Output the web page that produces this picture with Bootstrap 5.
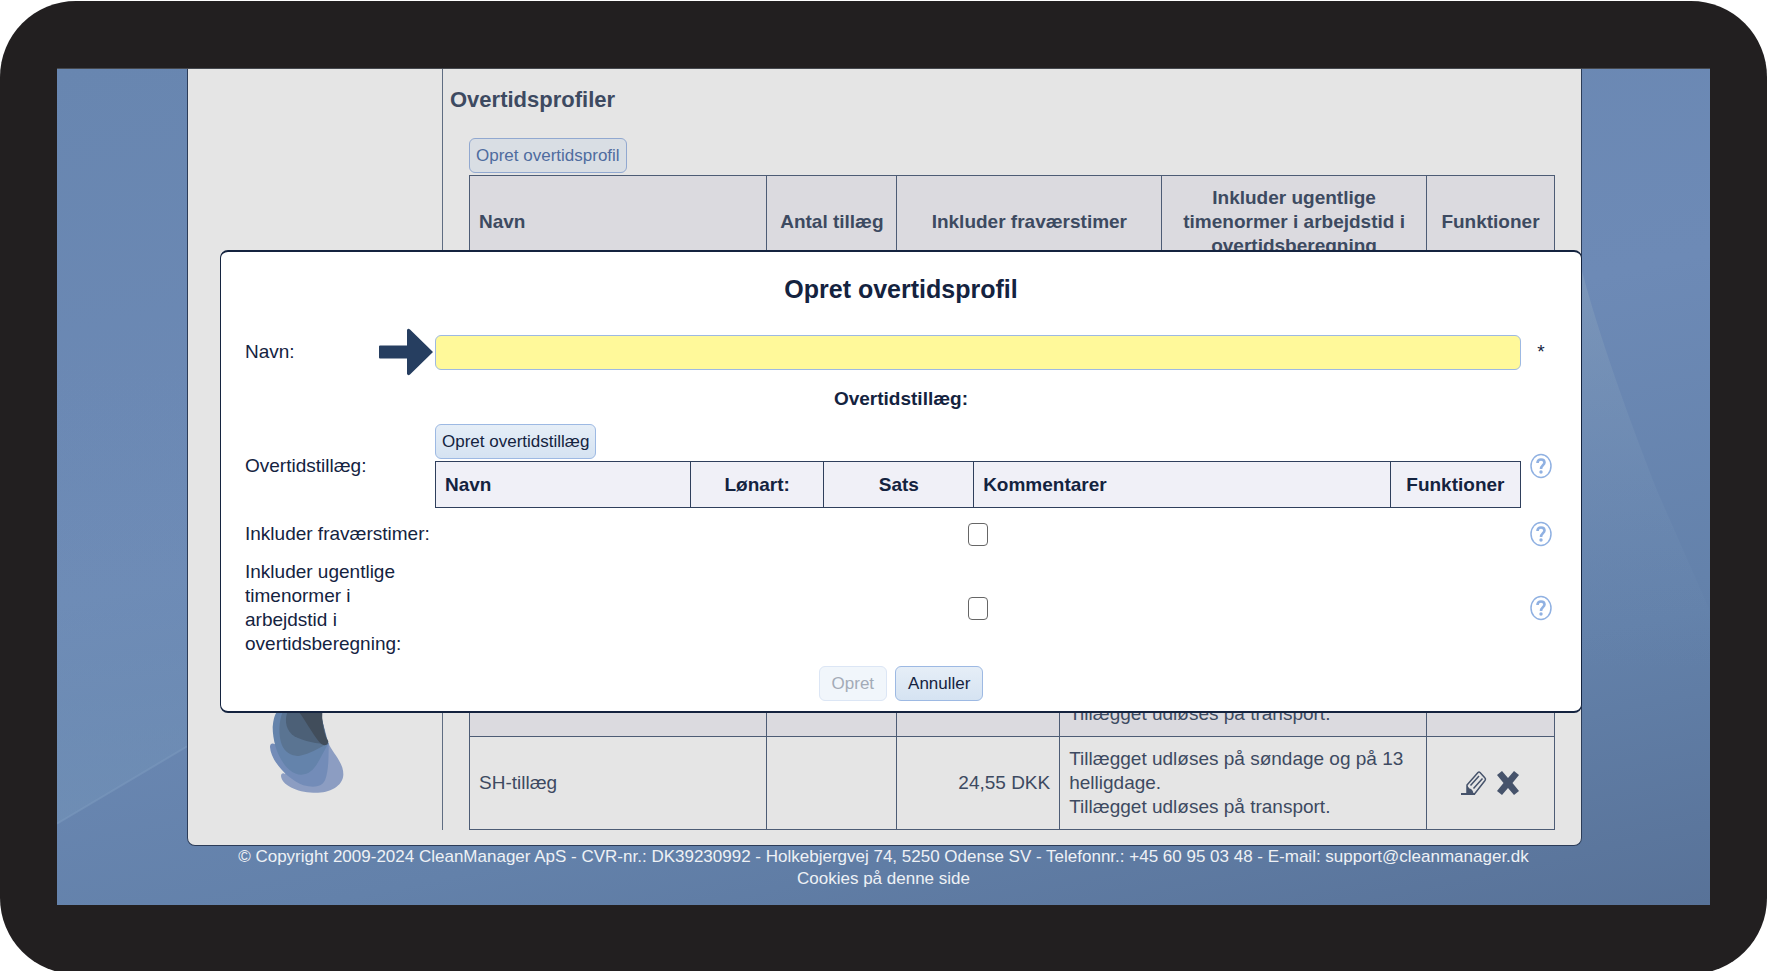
<!DOCTYPE html>
<html lang="da">
<head>
<meta charset="utf-8">
<meta name="viewport" content="width=device-width, initial-scale=1">
<title>Overtidsprofiler</title>
<link href="https://cdn.jsdelivr.net/npm/bootstrap@5.3.0/dist/css/bootstrap.min.css" rel="stylesheet">
<style>
  body { font-family: "Liberation Sans", Arial, sans-serif; font-size: 19px; line-height: 24px; color: #14233f; background: #fff; }
  .device { background: #221f20; border-radius: 76px; padding: 67px 57px 69px; margin-top: 1px; }
  .screen { background: linear-gradient(168deg, #6886b0 0%, #6d8ab6 45%, #6381aa 75%, #587298 100%); border-top: 1px solid #45484e; overflow: hidden; }
  .backdrop { inset: 0; }
  .panel { background: #e5e5e5; border: 1px solid #2c3c58; border-top: 0; border-radius: 0 0 8px 8px; margin: 0 128px 0 130px; padding-bottom: 15px; color: #3d4a61; }
  .side { width: 255px; border-right: 1px solid #5f6d82; padding: 0 0 18px 62px; }
  .main { padding: 18px 26px 0 26px; }
  .main h1 { font-size: 22px; line-height: 26px; font-weight: 700; margin: 0 0 25px -19px; }
  .cm-btn { font-size: 17px; line-height: 21px; padding: 6px; border: 1px solid #9db9e3; border-radius: 6px; background: linear-gradient(#e6eef7, #d5e3f2); color: #14233f; }
  .cm-btn:disabled { opacity: 1; background: #f1f6fb; border-color: #dce6f5; color: #a3abb7; }
  .muted-btn { background: #d9dee4; border-color: #91a8d0; color: #4f6c9f; }
  .wide-btn { padding: 6px 12px; }
  .grid-table { width: 100%; table-layout: fixed; border-collapse: collapse; margin-top: 2px; }
  .grid-table th, .grid-table td { border: 1px solid #4d5c75; padding: 10px 9px; }
  .grid-table th, .shade td { background: #dbdadf; }
  .gap-row td { height: 375px; }
  .cut-row td { height: 93px; vertical-align: bottom; }
  .footer-text { font-size: 17px; line-height: 22px; color: #eef1f5; padding-bottom: 15px; }
  .footer-text a { color: inherit; text-decoration: none; }
  .dialog-box { top: 181px; left: 32px; right: -1px; background: #fff; border: 1px solid #14233f; border-width: 2px 1px; border-radius: 8px; color: #14233f; padding: 22px 20px 10px 24px; }
  .dialog-box h2 { font-size: 25px; line-height: 30px; font-weight: 700; margin: 0 4px 24px 0; }
  .form-grid { display: grid; grid-template-columns: 190px 1fr 40px; align-items: center; row-gap: 13px; }
  .form-grid h3 { grid-column: 1 / -1; font-size: 19px; line-height: 24px; font-weight: 700; margin: -2px 4px 0 0; }
  .name-input { height: 35px; background: #fff99a; border: 1px solid #9db9e3; border-radius: 6px; padding: 0 8px; width: 100%; }
  .label-text { padding-right: 8px; }
  .inner-table th { background: #f0f0f7; border-color: #2f3f5c; height: 46px; padding: 0 9px; }
  .tick { appearance: none; width: 20px; height: 23px; border: 1px solid #666; border-radius: 4px; background: #fff; margin: 0; display: block; }
  .tick:checked { background: #2d6bd1; }
  .icon-btn { border: 0; background: none; padding: 0; line-height: 0; }
  .dialog-actions { margin: 10px 4px 0 0; }
</style>
</head>
<body>
<div class="device">
  <div class="screen position-relative">
    <svg class="backdrop position-absolute w-100 h-100" viewBox="0 0 1653 833" preserveAspectRatio="none" aria-hidden="true">
      <defs>
        <linearGradient id="leftGlow" x1="0" y1="0" x2="0" y2="1"><stop offset="0" stop-color="#6d8db6" stop-opacity="0"/><stop offset="1" stop-color="#7393b8"/></linearGradient>
        <linearGradient id="rightGlow" x1="0" y1="0" x2="0" y2="1"><stop offset="0" stop-color="#8aa2bd"/><stop offset="1" stop-color="#7090b8" stop-opacity="0"/></linearGradient>
      </defs>
      <path d="M0 290H130V675L0 752Z" fill="url(#leftGlow)" opacity=".6"/>
      <path d="M0 752L130 675" stroke="#7a98bd" stroke-width="2" opacity=".6"/>
      <path d="M1522 190Q1545 280 1600 420L1653 540V600H1522Z" fill="url(#rightGlow)" opacity=".5"/>
    </svg>

    <div class="panel position-relative d-flex">
      <aside class="side d-flex flex-column justify-content-end flex-shrink-0">
        <svg width="160" height="110" viewBox="0 0 480 330" role="img" aria-label="CleanManager">
          <path d="M235 122C245 150 281 180 280 218C278 255 235 274 190 272C140 271 95 248 93 222C93 214 100 212 105 216L120 190Z" fill="#8c9dc2"/>
          <path d="M236 122C236 170 236 205 225 235C215 256 190 258 160 250C110 230 62 175 60 135C60 124 68 122 75 127L150 110Z" fill="#738cb8"/>
          <path d="M235 124C215 160 200 195 182 208C165 222 140 222 118 203C85 175 68 120 68 75Q70 45 80 30H210Z" fill="#6483ab"/>
          <path d="M233 126C205 138 180 156 150 161C125 165 105 150 96 130C84 100 87 55 98 30H210Z" fill="#5a7492"/>
          <path d="M232 127C205 126 160 118 133 103C110 88 102 60 112 30H212Z" fill="#4c6077"/>
          <path d="M147 30C170 60 195 110 215 127Q233 135 235 118C222 95 215 70 217 30Z" fill="#414d5b"/>
        </svg>
      </aside>
      <main class="main flex-grow-1">
        <h1>Overtidsprofiler</h1>
        <button type="button" class="cm-btn muted-btn d-block">Opret overtidsprofil</button>
        <table class="grid-table">
          <colgroup><col style="width:27.4%"><col style="width:12%"><col style="width:15%"><col style="width:9.4%"><col style="width:24.4%"><col style="width:11.8%"></colgroup>
          <thead>
            <tr>
              <th>Navn</th>
              <th class="text-center">Antal tillæg</th>
              <th class="text-center" colspan="2">Inkluder fraværstimer</th>
              <th class="text-center">Inkluder ugentlige timenormer i arbejdstid i overtidsberegning</th>
              <th class="text-center">Funktioner</th>
            </tr>
          </thead>
          <tbody>
            <tr class="gap-row"><td></td><td></td><td></td><td colspan="2"></td><td></td></tr>
            <tr class="shade cut-row"><td></td><td></td><td></td><td colspan="2">Tillægget udløses på transport.</td><td></td></tr>
            <tr>
              <td>SH-tillæg</td><td></td>
              <td class="text-end">24,55 DKK</td>
              <td colspan="2">Tillægget udløses på søndage og på 13 helligdage.<br>Tillægget udløses på transport.</td>
              <td>
                <div class="d-flex justify-content-center gap-2">
                  <button type="button" class="icon-btn" aria-label="Rediger">
                    <svg width="28" height="26" viewBox="0 0 28 26" fill="none" stroke="#46536b"><path d="M1 24H15" stroke-width="2"/><path d="M7 15L18 2.500Q19 1.500 20 2.500L25 8Q26 9 25 10.500L14.500 24H7Z" stroke-width="1.500" stroke-linejoin="round"/><path d="M7 15.500V24H13.500Q13 19 9.500 18.500Z" fill="#46536b" stroke="none"/><path d="M10.500 15.500L19 6M13.500 18.500L22.500 8.500" stroke-width="1.500"/></svg>
                  </button>
                  <button type="button" class="icon-btn" aria-label="Slet">
                    <svg width="24" height="26" viewBox="0 0 24 26"><path d="M1 5L6 1L12 8L18 1L23 5L16.500 13L23 21L18 25L12 18L6 25L1 21L7.500 13Z" fill="#46536b"/></svg>
                  </button>
                </div>
              </td>
            </tr>
          </tbody>
        </table>
      </main>

      <form class="dialog-box position-absolute" role="dialog" aria-labelledby="dlgTitle" onsubmit="return false">
        <h2 id="dlgTitle" class="text-center">Opret overtidsprofil</h2>
        <div class="form-grid">
          <label for="navn" class="d-flex justify-content-between align-items-center">Navn:
            <svg width="57" height="48" viewBox="0 0 57 48" aria-hidden="true"><path d="M2 17.500H29V2Q30 0 32 1.500L55 24L32 46.500Q30 48 29 46V30.500H2Q1 30.500 1 29.500V18.500Q1 17.500 2 17.500Z" fill="#263e60"/></svg>
          </label>
          <input id="navn" class="name-input" type="text" required>
          <span class="text-center">*</span>

          <h3 class="text-center">Overtidstillæg:</h3>

          <span>Overtidstillæg:</span>
          <div>
            <button type="button" class="cm-btn d-block">Opret overtidstillæg</button>
            <table class="grid-table inner-table">
              <colgroup><col style="width:23.5%"><col style="width:12.3%"><col style="width:13.8%"><col style="width:38.4%"><col style="width:12%"></colgroup>
              <thead><tr><th>Navn</th><th class="text-center">Lønart:</th><th class="text-center">Sats</th><th>Kommentarer</th><th class="text-center">Funktioner</th></tr></thead>
            </table>
          </div>
          <button type="button" class="icon-btn" aria-label="Hjælp"><svg width="24" height="26" viewBox="0 0 24 26" fill="none" stroke="#90b1e2"><ellipse cx="12" cy="13" rx="10" ry="11.500" stroke-width="1.500"/><path d="M8.500 10Q8.500 6.500 12 6.500T15.500 9.500C15.500 12 12 12.500 12 16" stroke-width="2.600"/><circle cx="12" cy="19" r="1.700" fill="#90b1e2" stroke="none"/></svg></button>

          <label for="frav" class="text-nowrap">Inkluder fraværstimer:</label>
          <input id="frav" class="tick mx-auto" type="checkbox">
          <button type="button" class="icon-btn" aria-label="Hjælp"><svg width="24" height="26" viewBox="0 0 24 26" fill="none" stroke="#90b1e2"><ellipse cx="12" cy="13" rx="10" ry="11.500" stroke-width="1.500"/><path d="M8.500 10Q8.500 6.500 12 6.500T15.500 9.500C15.500 12 12 12.500 12 16" stroke-width="2.600"/><circle cx="12" cy="19" r="1.700" fill="#90b1e2" stroke="none"/></svg></button>

          <label for="norm" class="label-text">Inkluder ugentlige timenormer i arbejdstid i overtidsberegning:</label>
          <input id="norm" class="tick mx-auto" type="checkbox">
          <button type="button" class="icon-btn" aria-label="Hjælp"><svg width="24" height="26" viewBox="0 0 24 26" fill="none" stroke="#90b1e2"><ellipse cx="12" cy="13" rx="10" ry="11.500" stroke-width="1.500"/><path d="M8.500 10Q8.500 6.500 12 6.500T15.500 9.500C15.500 12 12 12.500 12 16" stroke-width="2.600"/><circle cx="12" cy="19" r="1.700" fill="#90b1e2" stroke="none"/></svg></button>
        </div>
        <div class="dialog-actions d-flex justify-content-center gap-2">
          <button type="submit" class="cm-btn wide-btn" disabled>Opret</button>
          <button type="button" class="cm-btn wide-btn">Annuller</button>
        </div>
      </form>
    </div>

    <footer class="footer-text position-relative text-center">
      <div>© Copyright 2009-2024 CleanManager ApS - CVR-nr.: DK39230992 - Holkebjergvej 74, 5250 Odense SV - Telefonnr.: +45 60 95 03 48 - E-mail: <a href="mailto:support@cleanmanager.dk">support@cleanmanager.dk</a></div>
      <a href="#">Cookies på denne side</a>
    </footer>
  </div>
</div>
<script src="https://cdn.jsdelivr.net/npm/bootstrap@5.3.0/dist/js/bootstrap.bundle.min.js"></script>
</body>
</html>
